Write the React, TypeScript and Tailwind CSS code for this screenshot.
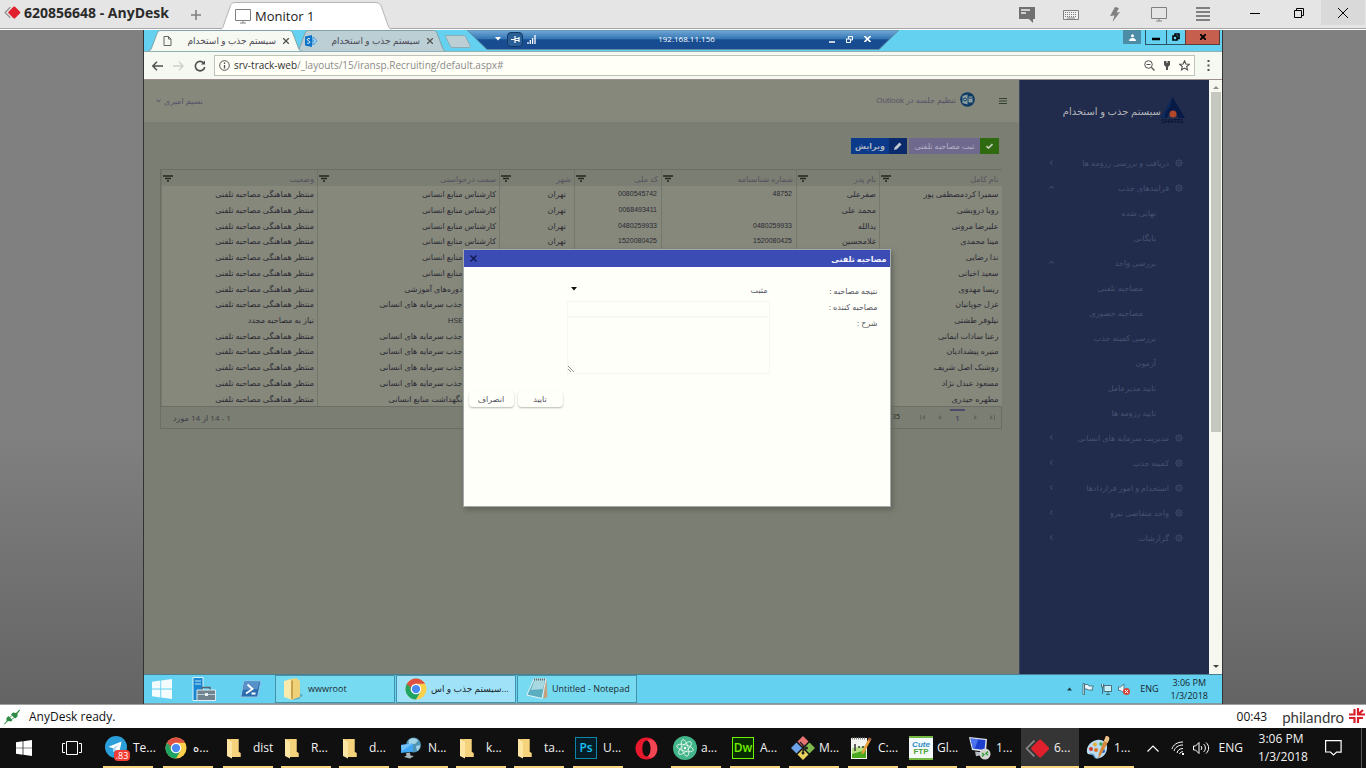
import { useState } from "react";
import type { ReactNode } from "react";

type Person = {
  name: string;
  father: string;
  certificate: string;
  nationalId: string;
  city: string;
  position: string;
  status: string;
};

const WAITING = "منتظر هماهنگی مصاحبه تلفنی";
const HR = "کارشناس منابع انسانی";
const TALENT = "کارشناس جذب سرمایه های انسانی";

const PEOPLE: Person[] = [
  { name: "سمیرا کردمصطفی پور", father: "صفرعلی", certificate: "48752", nationalId: "0080545742", city: "تهران", position: HR, status: WAITING },
  { name: "رویا درویشی", father: "محمد علی", certificate: "", nationalId: "0068493411", city: "تهران", position: HR, status: WAITING },
  { name: "علیرضا مرونی", father: "یدالله", certificate: "0480259933", nationalId: "0480259933", city: "تهران", position: HR, status: WAITING },
  { name: "مینا محمدی", father: "غلامحسین", certificate: "1520080425", nationalId: "1520080425", city: "تهران", position: HR, status: WAITING },
  { name: "ندا رضایی", father: "", certificate: "", nationalId: "", city: "", position: HR, status: WAITING },
  { name: "سعید اخیانی", father: "", certificate: "", nationalId: "", city: "", position: HR, status: WAITING },
  { name: "ریسا مهدوی", father: "", certificate: "", nationalId: "", city: "", position: "کارشناس دوره‌های آموزشی", status: WAITING },
  { name: "غزل جوپانیان", father: "", certificate: "", nationalId: "", city: "", position: TALENT, status: WAITING },
  { name: "نیلوفر طشتی", father: "", certificate: "", nationalId: "", city: "", position: "کارشناس HSE", status: "نیاز به مصاحبه مجدد" },
  { name: "رعنا سادات ایمانی", father: "", certificate: "", nationalId: "", city: "", position: TALENT, status: WAITING },
  { name: "منیره پیشدادیان", father: "", certificate: "", nationalId: "", city: "", position: TALENT, status: WAITING },
  { name: "روشنک اصل شریف", father: "", certificate: "", nationalId: "", city: "", position: TALENT, status: WAITING },
  { name: "مسعود عبدل نژاد", father: "", certificate: "", nationalId: "", city: "", position: TALENT, status: WAITING },
  { name: "مطهره حیدری", father: "", certificate: "", nationalId: "", city: "", position: "کارشناس نگهداشت منابع انسانی", status: WAITING },
];

const COLUMNS: { title: string; width: string }[] = [
  { title: "نام کامل", width: "w-[122px]" },
  { title: "نام پدر", width: "w-[83px]" },
  { title: "شماره شناسنامه", width: "w-[135px]" },
  { title: "کد ملی", width: "w-[87px]" },
  { title: "شهر", width: "w-[75px]" },
  { title: "سمت درخواستی", width: "w-[182px]" },
  { title: "وضعیت", width: "w-[156px]" },
];

type MenuItem = { label: string; level: 0 | 1 | 2; arrow?: "left" | "up" };

const MENU: MenuItem[] = [
  { label: "دریافت و بررسی رزومه ها", level: 0, arrow: "left" },
  { label: "فرایندهای جذب", level: 0, arrow: "up" },
  { label: "نهایی شده", level: 1 },
  { label: "بایگانی", level: 1 },
  { label: "بررسی واحد", level: 1, arrow: "up" },
  { label: "مصاحبه تلفنی", level: 2 },
  { label: "مصاحبه حضوری", level: 2 },
  { label: "بررسی کمیته جذب", level: 1 },
  { label: "آزمون", level: 1 },
  { label: "تایید مدیرعامل", level: 1 },
  { label: "تایید رزومه ها", level: 1 },
  { label: "مدیریت سرمایه های انسانی", level: 0, arrow: "left" },
  { label: "کمیته جذب", level: 0, arrow: "left" },
  { label: "استخدام و امور قراردادها", level: 0, arrow: "left" },
  { label: "واحد متقاضی نیرو", level: 0, arrow: "left" },
  { label: "گزارشات", level: 0, arrow: "left" },
];

/* ---------- icons ---------- */

function AnyDeskIcon({ size }: { size: number }) {
  return (
    <svg width={size} height={size} viewBox="0 0 24 24" className="shrink-0" aria-hidden="true">
      <path d="M9 4.500 1.500 12 9 19.500" fill="none" stroke="#8a8a8a" strokeWidth="1.600" />
      <path d="M14 3.500a1.500 1.500 0 0 1 1.600.4l7 7a1.500 1.500 0 0 1 0 2.200l-7 7a1.500 1.500 0 0 1-2.200 0l-7-7a1.500 1.500 0 0 1 0-2.200l7-7z" fill="#e0202c" />
    </svg>
  );
}

function ChromeIcon({ size }: { size: number }) {
  return (
    <svg width={size} height={size} viewBox="0 0 48 48" className="shrink-0" aria-hidden="true">
      <circle cx="24" cy="24" r="23" fill="#fbd04b" />
      <path d="M4.100 12.500A23 23 0 0 0 24 47l10-17.300L24 24l-10 5.800z" fill="#1fa463" />
      <path d="M4.100 12.500 14 29.700 24 13.500z" fill="#de4f44" />
      <path d="M4.100 12.500 14 29.700l10-5.700z" fill="#1fa463" />
      <path d="M4.100 12.500A23 23 0 0 1 43.900 12.500H24A11.500 11.500 0 0 0 13 20.500z" fill="#de4f44" />
      <circle cx="24" cy="24" r="11.500" fill="#fff" />
      <circle cx="24" cy="24" r="9" fill="#4a8af4" />
    </svg>
  );
}

function FolderIcon() {
  return (
    <svg width="14" height="21" viewBox="0 0 14 21" className="shrink-0" aria-hidden="true">
      <path d="M1 1h10.500v13l2 1v4H3z" fill="#ecc264" />
      <path d="M4 1h7.500v13l2 1v4H4z" fill="#f5d27c" />
      <path d="M0 1h1l4 3v16.500L0 18z" fill="#fde6a4" />
    </svg>
  );
}

function WindowsLogo({ size, color }: { size: number; color: string }) {
  return (
    <svg width={size} height={size} viewBox="0 0 20 20" fill={color} className="shrink-0" aria-hidden="true">
      <path d="M0 2.800 8.300 1.600v8H0zM9.200 1.500 20 0v9.600H9.200zM0 10.400h8.300v8L0 17.200zM9.200 10.400H20V20L9.200 18.500z" />
    </svg>
  );
}

function TelegramIcon() {
  return (
    <span className="relative block h-6 w-6 shrink-0">
      <svg width="22" height="22" viewBox="0 0 22 22" aria-hidden="true">
        <circle cx="11" cy="11" r="11" fill="#2b9fd9" />
        <path d="m3.500 10.800 13-5.200-2.200 11.200-3.800-2.900-2 2-.5-3.600z" fill="#fff" />
        <path d="m8 12.300 6.500-4.600-4 4.900-.3 2.400-1.700 1z" fill="#a9d5ee" />
      </svg>
      <span className="absolute top-[14px] left-[9px] flex h-[11px] w-4 items-center justify-center rounded-sm bg-[#f23c34] text-[9px] leading-none text-white">.83</span>
    </span>
  );
}

function GlobeMonitorIcon() {
  return (
    <svg width="22" height="22" viewBox="0 0 22 22" className="shrink-0" aria-hidden="true">
      <circle cx="13.500" cy="8" r="7.500" fill="#4f93b5" />
      <path d="M9 3c3-3 8-2 9 1-2 1-2 3-4 3s-1 4-3 3-3-4-2-7zM16 9l4-1c0 3-1 5-3 6z" fill="#a5d3e6" />
      <path d="m1 8 12-1.500v8L1 16z" fill="#3ea6f5" />
      <path d="m1 8 12-1.500L2 14z" fill="#73c3fb" />
      <path d="m6 16 4-.5.500 3L14 19l-4 2.500L4 20l2.500-1.500z" fill="#a7b5bd" />
    </svg>
  );
}

function AdobeIcon({ label, tone }: { label: string; tone: "cyan" | "green" }) {
  const colors =
    tone === "cyan"
      ? "border-[#0c87a8] bg-[#061d27] text-[#18c3f5]"
      : "border-[#6cf500] bg-[#072c00] text-[#75f000]";
  return (
    <span className={`flex h-[22px] w-[22px] shrink-0 items-center justify-center border text-[12px] leading-none font-semibold ${colors}`}>
      {label}
    </span>
  );
}

function OperaIcon() {
  return (
    <svg width="23" height="23" viewBox="0 0 24 24" aria-hidden="true">
      <path fillRule="evenodd" d="M12 .5C5.500.5.500 5.500.500 12S5.500 23.500 12 23.500 23.500 18.500 23.500 12 18.500.5 12 .5zm0 3.200c2.700 0 4.300 3.800 4.300 8.300S14.700 20.300 12 20.300 7.700 16.500 7.700 12 9.300 3.700 12 3.700z" fill="#e8192c" />
      <path d="M13 3.800C15.500 1.500 20 3 22 7c2 4 1.500 9-1.500 13-2.500 2-5.500 2-7.500.2 2-.7 3.300-4.200 3.300-8.200S15 4.500 13 3.800z" fill="#f9606a" opacity=".65" />
    </svg>
  );
}

function AtomIcon() {
  return (
    <svg width="24" height="24" viewBox="0 0 24 24" className="shrink-0" aria-hidden="true">
      <circle cx="12" cy="12" r="12" fill="#43b58a" />
      <g fill="none" stroke="#dff5ec" strokeWidth=".9">
        <ellipse cx="12" cy="12" rx="8.500" ry="3.200" transform="rotate(15 12 12)" />
        <ellipse cx="12" cy="12" rx="8.500" ry="3.200" transform="rotate(75 12 12)" />
        <ellipse cx="12" cy="12" rx="8.500" ry="3.200" transform="rotate(135 12 12)" />
      </g>
      <circle cx="12" cy="12" r="1.300" fill="#fff" />
    </svg>
  );
}

function GitIcon() {
  return (
    <svg width="24" height="24" viewBox="0 0 24 24" className="shrink-0" aria-hidden="true">
      <path d="m12 0 5.500 5.500L12 11 6.500 5.500z" fill="#e87373" />
      <path d="m18.500 6.500 5.500 5.500-5.500 5.500L13 12z" fill="#80bb4e" />
      <path d="m12 13 5.500 5.500L12 24l-5.500-5.500z" fill="#ecd25f" />
      <path d="m5.500 6.500L11 12l-5.500 5.500L0 12z" fill="#6ba2e8" />
      <path d="M9 6l6 6-3 3v3M12 9v6" fill="none" stroke="#222" strokeWidth="1.300" />
      <circle cx="12" cy="17" r="1.500" fill="#222" />
      <circle cx="15.500" cy="12" r="1.500" fill="#222" />
    </svg>
  );
}

function NotepadPlusIcon() {
  return (
    <svg width="22" height="24" viewBox="0 0 22 24" className="shrink-0" aria-hidden="true">
      <path d="M1 2h16v21H1z" fill="#f2f4f0" />
      <path d="M2 14 16 12v10H2z" fill="#4aa81f" />
      <path d="M2 12 16 10v4L2 18z" fill="#b6e07f" />
      <path d="M2 2.500h14" stroke="#888" strokeWidth="2" strokeDasharray="1 1" />
      <path d="M5 8v7M8 11h2M12 11h2" stroke="#333" strokeWidth="1.500" />
      <path d="m19 1.500 2.500 1.500L14 17l-2.500 1.500L12 15.500z" fill="#e8a13a" />
      <path d="m19 1.500 2.500 1.500-1.200 2-2.400-1.500z" fill="#9c5040" />
    </svg>
  );
}

function CuteFtpIcon() {
  return (
    <span className="flex h-6 w-6 shrink-0 flex-col items-center justify-center border-y-2 border-[#73b944] bg-[#f4f9fb] font-['Liberation_Sans',sans-serif] text-[8px] leading-[7px] font-bold">
      <span className="text-[#2e8ec4] italic">Cute</span>
      <span className="text-[#4da23a]">FTP</span>
    </span>
  );
}

function RemoteDesktopIcon() {
  return (
    <svg width="23" height="24" viewBox="0 0 23 24" className="shrink-0" aria-hidden="true">
      <path d="m1 1 18 2-1 13L4 14z" fill="#dfe4ea" />
      <path d="m2.500 2.500 15 1.500-1 10L5 12.500z" fill="#1c3fd0" />
      <path d="m2.500 2.500 8 .8-4 9.500L5 12.500z" fill="#4c73ee" />
      <path d="m7 15.500 6 .7v3l-5 1z" fill="#b7bec6" />
      <circle cx="17" cy="18" r="5.500" fill="#d2d5d1" />
      <path d="m14 17 2 1.500-2 2M20 15.500 18 17.500l2 1.500" fill="none" stroke="#2e9a35" strokeWidth="1.400" />
    </svg>
  );
}

function PaintIcon() {
  return (
    <svg width="24" height="24" viewBox="0 0 24 24" className="shrink-0" aria-hidden="true">
      <path d="M11 4c6-1 11 3 10 9-.5 5-5 9.500-10 9.500-3 0-2-3-4-4-2-1-5 1-6-2C0 10 5 5 11 4z" fill="#b9dcf1" />
      <path d="M3 18c2-1 5-1 6 2s3 2 5 1-1 2-4 1.500c-2 0-2-3-4-3.500z" fill="#5ca0cf" />
      <circle cx="5" cy="13" r="2" fill="#d43c2e" />
      <circle cx="9" cy="8.500" r="2" fill="#e8b030" />
      <circle cx="15" cy="8" r="1.800" fill="#3fa34d" />
      <circle cx="10" cy="14" r="2" fill="#e07020" />
      <circle cx="17" cy="15" r="2" fill="#2563c4" />
      <path d="M20 0c2 0 4 1 3 4L15 19l-3 3 1-5z" fill="#d7863a" />
      <path d="M20 0c2 0 4 1 3 4l-1.500 3L18 5z" fill="#e8c28a" />
    </svg>
  );
}

function FilterIcon() {
  return (
    <svg width="10" height="7" viewBox="0 0 10 7" className="shrink-0" aria-hidden="true">
      <path d="M0 1h10M2 3.500h6M4 6h2" stroke="#26271f" strokeWidth="1.600" />
    </svg>
  );
}

function PageIcon() {
  return (
    <svg width="9" height="10" viewBox="0 0 9 10" className="shrink-0" fill="none" stroke="#666" aria-hidden="true">
      <path d="M1 .5h4.500L8 3v6.500H1zM5.500.5V3H8" />
    </svg>
  );
}

function GearIcon() {
  return (
    <svg width="8" height="8" viewBox="0 0 10 10" className="shrink-0" fill="none" stroke="#465171" aria-hidden="true">
      <circle cx="5" cy="5" r="1.500" strokeWidth=".8" />
      <circle cx="5" cy="5" r="3.700" strokeWidth=".8" />
      <path d="M5 0v2M5 8v2M0 5h2M8 5h2M1.500 1.500l1.400 1.400M7.100 7.100l1.400 1.400M8.500 1.500 7.100 2.900M2.900 7.100 1.500 8.500" strokeWidth=".8" />
    </svg>
  );
}

/* ---------- client window ---------- */

function ClientTitleBar() {
  return (
    <header className="flex h-[30px] items-stretch border-b border-white bg-[#e5e5e5] shadow-[inset_0_-1px_0_#a6a6a6]">
      <div className="flex w-[188px] items-center gap-[3px] pb-1 pl-1 text-[14px] font-bold text-[#2b2b2b]">
        <AnyDeskIcon size={17} />
        <h1 className="whitespace-nowrap">620856648 - AnyDesk</h1>
      </div>
      <button type="button" aria-label="New tab" className="flex w-4 items-center justify-center text-[#808080]">
        <svg width="10" height="10" viewBox="0 0 10 10" stroke="currentColor" strokeWidth="1.600"><path d="M5 0v10M0 5h10" /></svg>
      </button>
      <div className="relative ml-4 flex h-[30px] w-[172px] items-center gap-1 pt-[3px] pl-[15px] text-[13px]">
        <svg className="absolute inset-0 h-full w-full" viewBox="0 0 172 30" preserveAspectRatio="none" aria-hidden="true">
          <path d="M0 29c3 0 3-2 4-5l6-17c1-4 3-4.500 6-4.500h138c5 0 6 1 7.500 4.500l6 17c1 3 2 5 4.500 5" fill="#fff" stroke="#b5b5b5" />
          <path d="M2 29.500h168" stroke="#fff" />
        </svg>
        <svg width="16" height="15" viewBox="0 0 16 15" className="relative" fill="none" stroke="#808080" aria-hidden="true">
          <path d="M.5.500h15v11H.500zM5 14h6M8 11.500V14" />
        </svg>
        <span className="relative text-[#1a1a1a]">Monitor 1</span>
      </div>
      <div className="flex-1" />
      <div className="mr-[22px] flex items-center gap-7 text-[#808080]">
        <button type="button" aria-label="Chat">
          <svg width="16" height="16" viewBox="0 0 16 16"><path d="M0 0h16v12h-2v4l-4-4H0z" fill="#707070" /><path d="M2 3h9M2 6h5" stroke="#eee" strokeWidth="1.400" /></svg>
        </button>
        <button type="button" aria-label="Keyboard">
          <svg width="16" height="10" viewBox="0 0 16 10"><path d="M.5.500h15v9H.500z" fill="#f0f0f0" stroke="currentColor" /><path d="M2 2.500h12M2 4.500h12M2 6.500h12" stroke="currentColor" strokeDasharray="1 1" /><path d="M4 8h8" stroke="currentColor" /></svg>
        </button>
        <button type="button" aria-label="Actions" className="flex w-4 justify-center">
          <svg width="10" height="15" viewBox="0 0 10 15" fill="currentColor"><path d="M5 0 9 1 6.500 5.500 10 5 2.500 15 4.500 8.500 0 9z" /></svg>
        </button>
        <button type="button" aria-label="Display">
          <svg width="16" height="15" viewBox="0 0 16 15" fill="none" stroke="currentColor"><path d="M.5.500h15v11H.500zM5 14h6M8 11.500V14" /></svg>
        </button>
        <button type="button" aria-label="Menu">
          <svg width="16" height="15" viewBox="0 0 16 15" stroke="currentColor" strokeWidth="2"><path d="M1 1h14M1 5h14M1 9h14M1 13h14" /></svg>
        </button>
      </div>
      <div className="flex h-[25px] text-black">
        <button type="button" aria-label="Minimize" className="flex w-11 items-center justify-center">
          <svg width="10" height="10" viewBox="0 0 10 10" stroke="currentColor"><path d="M0 5.500h10" /></svg>
        </button>
        <button type="button" aria-label="Restore" className="flex w-11 items-center justify-center">
          <svg width="10" height="10" viewBox="0 0 10 10" fill="none" stroke="currentColor"><path d="M.5 2.500h7v7h-7zM2.500 2.500v-2h7v7h-2" /></svg>
        </button>
        <button type="button" aria-label="Close" className="mr-px flex w-11 items-center justify-center bg-[#d9d9d9]">
          <svg width="10" height="10" viewBox="0 0 10 10" stroke="currentColor"><path d="m0 0 10 10M10 0 0 10" /></svg>
        </button>
      </div>
    </header>
  );
}

/* ---------- browser ---------- */

function BrowserTab({ active, icon, width, tone }: { active?: boolean; icon: ReactNode; width: string; tone: string }) {
  return (
    <div className={`relative flex h-[21px] shrink-0 items-center ${width} ${active ? "z-10" : "-ml-2"}`}>
      <svg className="absolute inset-0 h-full w-full" viewBox="0 0 158 21" preserveAspectRatio="none" aria-hidden="true">
        <path d="M0 21.500C3 21 4 20 5 17l5-13C11 1.500 12 .5 14 .5h130c2 0 3 1 4 3.500l5 13c1 3 2 4 5 4.500" className={tone} stroke="#7fa0a8" />
      </svg>
      <div className="relative flex w-full items-center pr-[14px] pl-4">
        {icon}
        <span dir="rtl" className="ml-auto text-[9px] whitespace-nowrap text-[#4d4a55]">سیستم جذب و استخدام</span>
        <button type="button" aria-label="Close tab" className="ml-[7px] text-[#555]">
          <svg width="6" height="6" viewBox="0 0 6 6" stroke="currentColor" strokeWidth="1.300"><path d="m0 0 6 6M6 0 0 6" /></svg>
        </button>
      </div>
    </div>
  );
}

function SessionBar() {
  return (
    <div className="absolute top-0 left-1/2 z-20 h-5 w-[432px] -translate-x-1/2">
      <svg className="absolute inset-0 h-full w-full" viewBox="0 0 432 20" preserveAspectRatio="none" aria-hidden="true">
        <defs>
          <linearGradient id="session" x1="0" y1="0" x2="0" y2="1">
            <stop offset="0" stopColor="#76a9d8" />
            <stop offset=".45" stopColor="#3377b4" />
            <stop offset=".5" stopColor="#184d92" />
            <stop offset="1" stopColor="#184a8f" />
          </linearGradient>
        </defs>
        <path d="M0 0h432l-20 19.500H20z" fill="url(#session)" stroke="#5d8fa5" />
      </svg>
      <div className="relative flex h-[18px] items-center px-7 text-white">
        <svg width="6" height="4" viewBox="0 0 6 4" fill="currentColor" aria-hidden="true"><path d="M0 0h6L3 3.500z" /></svg>
        <button type="button" aria-label="Pin" className="ml-[6px] flex h-[15px] w-4 items-center justify-center rounded-sm border border-[#123a66] bg-[#2a5f98]">
          <svg width="9" height="7" viewBox="0 0 9 7" stroke="currentColor" strokeWidth="1.200"><path d="M0 3.500h4M4 0v7M4 2.500h4M4 4.500h4M8 1v5" /></svg>
        </button>
        <svg width="9" height="9" viewBox="0 0 9 9" className="ml-1" stroke="currentColor" strokeWidth="1.300" aria-hidden="true"><path d="M1 9V7M3.300 9V5M5.600 9V3M8 9V0" /></svg>
        <span className="flex-1 pl-2 text-center text-[8px]">192.168.11.156</span>
        <div className="flex items-center gap-[11px]">
          <svg width="6" height="7" viewBox="0 0 6 7" stroke="currentColor" strokeWidth="1.500" aria-hidden="true"><path d="M0 6h6" /></svg>
          <svg width="7" height="7" viewBox="0 0 7 7" fill="none" stroke="currentColor" aria-hidden="true"><path d="M.5 3h4v3.500h-4zM2.500 3V.5h4V4h-2" /></svg>
          <svg width="7" height="6" viewBox="0 0 7 6" stroke="currentColor" strokeWidth="1.600" aria-hidden="true"><path d="m.5 0 6 6M6.500 0l-6 6" /></svg>
        </div>
      </div>
    </div>
  );
}

function BrowserChrome() {
  return (
    <>
      <div className="relative flex h-[21px] bg-[#64d1f0] pl-[3px]">
        <BrowserTab active width="w-[156px]" tone="fill-[#f6f8f2]" icon={<PageIcon />} />
        <BrowserTab
          width="w-[152px]"
          tone="fill-[#bccfd5]"
          icon={
            <svg width="13" height="12" viewBox="0 0 13 12" className="-ml-[6px] shrink-0" aria-hidden="true">
              <path d="M7 2h2l3.500 4L9 10H7z" fill="#5aa8e0" />
              <path d="m8 3.500 2.500 2.500L8 8.500" fill="none" stroke="#e8f2fa" />
              <path d="M0 1.500 7 0v12L0 10.500z" fill="#0b74c8" />
              <path d="M5 4C4 3 2 3.500 2.300 4.800S5 6 4.800 7.300 2.500 8.500 2 7.800" fill="none" stroke="#fff" />
            </svg>
          }
        />
        <svg width="28" height="14" viewBox="0 0 28 14" className="-ml-[3px] mt-[5px]" aria-hidden="true">
          <path d="M2 .5h17c2 0 2.500.5 3 2l4 8c.5 1.500 0 2-1.500 2H9c-2 0-2.500-.5-3-2l-4-8C1.500 1 1 .5 2 .5z" fill="#bccfd5" stroke="#8aabb4" />
        </svg>
        <SessionBar />
        <div className="ml-auto flex h-[15px]">
          <button type="button" aria-label="Profile" className="mr-1 flex h-[14px] w-[18px] items-center justify-center bg-[#4c8ca6]">
            <svg width="7" height="7" viewBox="0 0 7 7" fill="#fff"><circle cx="3.500" cy="1.800" r="1.500" /><path d="M0 7c0-4 7-4 7 0z" /></svg>
          </button>
          <button type="button" aria-label="Minimize" className="flex w-[22px] items-center justify-center border border-t-0 border-[#2b5361]">
            <svg width="8" height="8" viewBox="0 0 8 8" stroke="#000" strokeWidth="2.500"><path d="M0 6h8" /></svg>
          </button>
          <button type="button" aria-label="Restore" className="flex w-[18px] items-center justify-center border-b border-[#2b5361]">
            <svg width="8" height="8" viewBox="0 0 8 8" fill="none" stroke="#000" strokeWidth="1.600"><path d="M1 3h4v4H1zM3 2.500V1h4v4.500H5" /></svg>
          </button>
          <button type="button" aria-label="Close" className="mr-[2px] flex w-[35px] items-center justify-center border border-t-0 border-[#5e3a36] bg-[#c65f4e]">
            <svg width="6" height="6" viewBox="0 0 6 6" stroke="#000" strokeWidth="1.800"><path d="m0 0 6 6M6 0 0 6" /></svg>
          </button>
        </div>
      </div>
      <div className="flex h-[29px] items-center border-t border-b border-t-[#8fb0b6] border-b-[#9b8e8e] bg-[#f6f8f2] pl-2 text-[#505050]">
        <button type="button" aria-label="Back">
          <svg width="11" height="10" viewBox="0 0 11 10" fill="none" stroke="currentColor" strokeWidth="1.500"><path d="M11 5H1M5 .7.800 5 5 9.300" /></svg>
        </button>
        <button type="button" aria-label="Forward" className="ml-[10px] text-[#ccd0c9]">
          <svg width="11" height="10" viewBox="0 0 11 10" fill="none" stroke="currentColor" strokeWidth="1.300"><path d="M0 5h10M6 .7 10.200 5 6 9.300" /></svg>
        </button>
        <button type="button" aria-label="Reload" className="ml-[10px]">
          <svg width="12" height="12" viewBox="0 0 12 12" fill="none" stroke="currentColor" strokeWidth="1.600"><path d="M10 3.500A4.700 4.700 0 1 0 10.700 7" /><path d="M11 .5v4H7z" fill="currentColor" stroke="none" /></svg>
        </button>
        <div className="mx-2 flex h-[21px] flex-1 items-center gap-1 border border-[#bfc3b8] bg-[#fffff8] px-1">
          <svg width="11" height="11" viewBox="0 0 11 11" fill="none" stroke="currentColor" aria-hidden="true"><circle cx="5.500" cy="5.500" r="4.800" /><path d="M5.500 5v3.500M5.500 2.500V4" strokeWidth="1.300" /></svg>
          <p className="flex-1 text-[10px] text-[#8a8a88]">
            <span className="text-[#2f2f2f]">srv-track-web</span>/_layouts/15/iransp.Recruiting/default.aspx#
          </p>
          <svg width="11" height="11" viewBox="0 0 11 11" fill="none" stroke="currentColor" aria-hidden="true"><circle cx="4.500" cy="4.500" r="3.800" /><path d="M2.500 4.500h4M7.500 7.500l3 3" strokeWidth="1.200" /></svg>
          <svg width="8" height="9" viewBox="0 0 8 9" fill="currentColor" className="ml-1" aria-hidden="true"><path d="M1 0h6v4L5 6v3H3V6L1 4z" /><path d="M3.500 0h1v2h-1z" fill="#fffff8" /></svg>
          <svg width="11" height="11" viewBox="0 0 11 11" fill="none" stroke="currentColor" strokeWidth="1.100" className="ml-1" aria-hidden="true"><path d="m5.500.8 1.400 3.200 3.400.3-2.600 2.200.8 3.400-3-1.800-3 1.800.8-3.400L.7 4.300 4.100 4z" /></svg>
        </div>
        <button type="button" aria-label="Browser menu" className="mr-3 ml-1">
          <svg width="3" height="11" viewBox="0 0 3 11" fill="currentColor"><path d="M.5 0h2v2h-2zM.5 4.500h2v2h-2zM.5 9h2v2h-2z" /></svg>
        </button>
      </div>
    </>
  );
}

/* ---------- recruiting site ---------- */

function Sidebar() {
  const indent = ["pr-[26px]", "pr-[53px]", "pr-[66px]"];
  return (
    <aside dir="rtl" className="flex w-[190px] shrink-0 flex-col border-l border-[#3b4663] bg-[#212b4b]">
      <div className="flex h-[70px] items-center pr-6 pb-2 text-[10px] text-[#b4b6bb]">
        <div className="flex flex-col items-center">
          <svg width="24" height="21" viewBox="0 0 24 21" aria-hidden="true">
            <path d="M11.500 0 24 21h-6.500c-1-4-3-6-6-6S7 17 6 21H0z" fill="#071a45" />
            <path d="M11.500 0 9 10l-4 5-1 6H0z" fill="#0b2a5f" />
            <circle cx="12" cy="17" r="3.500" fill="#b0472b" />
          </svg>
          <span className="font-['Liberation_Sans',sans-serif] text-[6px] leading-[7px] font-bold text-[#071233]">SHATEL</span>
        </div>
        <h2 className="whitespace-nowrap">سیستم جذب و استخدام</h2>
      </div>
      <nav>
        <ul>
          {MENU.map((item) => (
            <li key={item.label}>
              <a href="#" className={`flex h-[25px] items-center gap-[6px] pl-7 text-[8px] text-[#465071] ${indent[item.level]}`}>
                {item.level === 0 && <GearIcon />}
                <span className="flex-1 whitespace-nowrap">{item.label}</span>
                {item.arrow && (
                  <svg width="5" height="5" viewBox="0 0 5 5" fill="none" stroke="currentColor" className="mx-px" aria-hidden="true">
                    <path d={item.arrow === "left" ? "M3.500.5 1 2.500l2.500 2" : "M.5 3.500 2.500 1l2 2.500"} />
                  </svg>
                )}
              </a>
            </li>
          ))}
        </ul>
      </nav>
    </aside>
  );
}

function PeopleTable() {
  const numeric = "border-l border-[#74776c] px-[3px] pr-1 text-right font-['Liberation_Sans',sans-serif] text-[7px]";
  const cell = "border-l border-[#74776c] px-[3px] whitespace-nowrap";
  return (
    <div className="mr-[17px] ml-4 border border-[#6b6e64]">
      <table dir="rtl" className="h-[236px] w-full table-fixed border-collapse bg-[#85887b] text-[8px] leading-[13px] text-[#2c2a35]">
        <thead className="bg-[#7b7e72] text-[#57525f]">
          <tr>
            {COLUMNS.map((column) => (
              <th key={column.title} scope="col" className={`h-4 border-l border-[#6f7268] p-0 pr-[3px] pl-px font-normal ${column.width}`}>
                <div className="flex items-center justify-between">
                  <span className="whitespace-nowrap">{column.title}</span>
                  <FilterIcon />
                </div>
              </th>
            ))}
          </tr>
        </thead>
        <tbody>
          {PEOPLE.map((person) => (
            <tr key={person.name}>
              <td className={cell}>{person.name}</td>
              <td className={cell}>{person.father}</td>
              <td className={numeric}>{person.certificate}</td>
              <td className={numeric}>{person.nationalId}</td>
              <td className={`${cell} pr-2`}>{person.city}</td>
              <td className={cell}>{person.position}</td>
              <td className={cell}>{person.status}</td>
            </tr>
          ))}
        </tbody>
      </table>
      <div className="flex h-[22px] items-center border-t border-[#6b6e64] bg-[#7b7e72] pr-[10px] pl-3 text-[8px] text-[#3f3d48]">
        <span dir="rtl">1 - 14 از 14 مورد</span>
        <span className="ml-auto text-[7px] text-[#222]">35</span>
        <div className="ml-5 flex items-center gap-3 text-[#62655f]">
          <svg width="5" height="5" viewBox="0 0 5 5" fill="currentColor" aria-hidden="true"><path d="M0 0h1v5H0zM5 0v5L2 2.500z" /></svg>
          <svg width="5" height="5" viewBox="0 0 5 5" fill="currentColor" aria-hidden="true"><path d="M4 0v5L1 2.500z" /></svg>
          <span className="-mx-1 flex h-[18px] w-[15px] justify-center border-t-2 border-[#4d4a6c] leading-[13px] text-[#33305c]">1</span>
          <svg width="5" height="5" viewBox="0 0 5 5" fill="currentColor" aria-hidden="true"><path d="M1 0v5l3-2.500z" /></svg>
          <svg width="5" height="5" viewBox="0 0 5 5" fill="currentColor" className="-mr-1" aria-hidden="true"><path d="M4 0h1v5H4zM0 0v5l3-2.500z" /></svg>
        </div>
      </div>
    </div>
  );
}

function InterviewDialog() {
  const [result, setResult] = useState("positive");
  const button = "h-4 w-[45px] rounded-sm bg-[#fffffa] shadow-[0_1px_2px_#b5bab0]";
  return (
    <div className="absolute inset-0 flex items-center justify-center pt-[2px]">
      <section role="dialog" aria-labelledby="dialog-title" dir="rtl" className="h-[258px] w-[428px] border border-[#a5a8a8] bg-[#fffffa] text-[8px] leading-4 text-[#55565e] shadow-[2px_3px_5px_#62655b]">
        <div className="flex h-[17px] items-center justify-between bg-[#3b4db5] pr-[3px] pl-[6px]">
          <h3 id="dialog-title" className="text-[8px] font-bold text-[#f3f3fa]">مصاحبه تلفنی</h3>
          <button type="button" aria-label="بستن" className="text-[#10164a]">
            <svg width="7" height="7" viewBox="0 0 7 7" stroke="currentColor" strokeWidth="1.300"><path d="m.5.5 6 6M6.500.5l-6 6" /></svg>
          </button>
        </div>
        <form onSubmit={(event) => event.preventDefault()}>
          <div className="flex pt-4 pr-3">
            <div className="flex w-[108px] flex-col">
              <label htmlFor="result">نتیجه مصاحبه :</label>
              <label htmlFor="interviewer">مصاحبه کننده :</label>
              <label htmlFor="description">شرح :</label>
            </div>
            <div className="flex w-[203px] flex-col">
              <div className="relative mb-1 flex h-[14px]">
                <select id="result" value={result} onChange={(event) => setResult(event.target.value)} className="w-full appearance-none bg-transparent px-[2px] leading-[14px] outline-none">
                  <option value="positive">مثبت</option>
                  <option value="negative">منفی</option>
                </select>
                <svg width="6" height="4" viewBox="0 0 6 4" className="pointer-events-none absolute top-1 left-1" aria-hidden="true"><path d="M0 0h6L3 3.500z" fill="#111" /></svg>
              </div>
              <input id="interviewer" type="text" className="h-4 border border-[#f6f7f1] bg-transparent px-1 outline-none" />
              <div className="relative flex">
                <textarea id="description" className="h-[57px] w-full resize-none border border-[#f6f7f1] bg-transparent px-1 outline-none" />
                <svg width="6" height="6" viewBox="0 0 6 6" className="absolute bottom-[2px] left-px" stroke="#777" strokeWidth=".8" aria-hidden="true"><path d="m0 0 6 6M0 3l3 3" /></svg>
              </div>
            </div>
          </div>
          <div className="mt-[17px] flex justify-end gap-1 pl-[5px]">
            <button type="submit" className={button}>تایید</button>
            <button type="button" className={button}>انصراف</button>
          </div>
        </form>
      </section>
    </div>
  );
}

function RecruitingPage() {
  return (
    <div className="flex min-h-0 flex-1">
      <div className="relative flex min-w-0 flex-1">
        <main className="flex min-w-0 flex-1 flex-col bg-[#7b7e72]">
          <div className="flex h-[42px] items-center justify-between bg-[#85887b] pr-3 pl-3 text-[8px] text-[#5a5268]">
            <button type="button" className="flex items-center gap-[3px]">
              <svg width="5" height="4" viewBox="0 0 5 4" fill="none" stroke="currentColor" aria-hidden="true"><path d="m.5.5 2 2.500 2-2.500" /></svg>
              <span dir="rtl">نسیم امیری</span>
            </button>
            <div className="flex items-center">
              <span dir="rtl" className="font-['Liberation_Sans','DejaVu_Sans',sans-serif] whitespace-nowrap">تنظیم جلسه در Outlook</span>
              <svg width="15" height="15" viewBox="0 0 15 15" className="-mt-1 ml-1" aria-hidden="true">
                <circle cx="7.500" cy="7.500" r="7.300" fill="#0d3b66" />
                <path d="m2.500 4 5-1.500v10l-5-1.500zM8.500 4.500h4v6h-4z" fill="#8fa0a0" />
                <circle cx="5" cy="7.500" r="1.500" fill="none" stroke="#0d3b66" />
                <path d="m8.500 5 2 2 2-2" fill="none" stroke="#0d3b66" />
              </svg>
              <button type="button" aria-label="Toggle menu" className="ml-6">
                <svg width="8" height="8" viewBox="0 0 8 8" stroke="#31412f"><path d="M0 1.500h8M0 4h8M0 6.500h8" /></svg>
              </button>
            </div>
          </div>
          <div className="mt-4 mr-5 mb-[15px] flex justify-end gap-[2px] text-[8px]">
            <button type="button" className="flex h-4 items-stretch bg-[#0b3a8a] font-bold text-[#a9b3c2]">
              <span className="flex w-[38px] items-center justify-center">ویرایش</span>
              <span className="flex w-[18px] items-center justify-center bg-[#0a2a6c]">
                <svg width="8" height="8" viewBox="0 0 8 8" fill="#c5cad2" aria-hidden="true"><path d="M0 8l.8-2.800L5.500.5 7.500 2.500 2.800 7.200z" /></svg>
              </span>
            </button>
            <button type="button" className="flex h-4 items-stretch bg-[#6f6a8d] text-[#b4b0c6]">
              <span className="flex w-[71px] items-center justify-center whitespace-nowrap">ثبت مصاحبه تلفنی</span>
              <span className="flex w-[19px] items-center justify-center bg-[#306a10]">
                <svg width="7" height="6" viewBox="0 0 7 6" fill="none" stroke="#c8d0c0" strokeWidth="1.600" aria-hidden="true"><path d="m.5 3 2 2 4-4" /></svg>
              </span>
            </button>
          </div>
          <PeopleTable />
        </main>
        <Sidebar />
        <InterviewDialog />
      </div>
      <div className="flex w-[13px] shrink-0 flex-col items-center bg-[#f6f8f0] py-1">
        <svg width="6" height="8" viewBox="0 0 6 8" fill="#8d9089" aria-hidden="true"><path d="M0 5h6L3 2z" /></svg>
        <div className="h-[58%] w-[10px] bg-[#c5c8bf]" />
        <svg width="6" height="6" viewBox="0 0 6 6" fill="#44463f" className="mt-auto" aria-hidden="true"><path d="M0 1h6L3 4z" /></svg>
      </div>
    </div>
  );
}

/* ---------- server taskbar ---------- */

function ServerTaskbar() {
  const item = "flex w-[120px] items-center gap-1 border border-[#4591aa] px-2 text-[9px] text-[#1d2a30]";
  return (
    <div className="flex h-[30px] items-stretch border-t border-b border-t-[#497f90] border-b-[#7d9aa2] bg-[#64d1f0]">
      <div className="flex w-[131px] items-center pl-2">
        <WindowsLogo size={20} color="#f3fbfd" />
        <svg width="24" height="24" viewBox="0 0 24 24" className="ml-5" aria-hidden="true">
          <path d="M1 .5h10v23H1z" fill="#1886d0" stroke="#d8f1fa" />
          <path d="M3 4h6M3 7h6" stroke="#bfe6f6" />
          <path d="M10 13V10.500h8V13" fill="none" stroke="#53656f" strokeWidth="1.500" />
          <path d="M5 13h18.500v10.500H5z" fill="#70838e" stroke="#dcecf2" />
          <path d="M5 17.500h18" stroke="#b9cbd3" />
          <path d="M13 16h3v3h-3z" fill="#e8eef0" />
        </svg>
        <svg width="22" height="18" viewBox="0 0 22 18" className="ml-6" aria-hidden="true">
          <path d="M4 1h17l-3.500 16H.800z" fill="#2c6db0" stroke="#8fc4e6" />
          <path d="M4.500 2h15l-2 7L2.800 10z" fill="#5791c8" />
          <path d="m7.500 4.500 5 4.500-6.500 4.500M11.500 13.500h4" fill="none" stroke="#fff" strokeWidth="1.800" />
        </svg>
      </div>
      <button type="button" className={`${item} bg-[#76dbf1]`}>
        <svg width="20" height="22" viewBox="0 0 20 22" aria-hidden="true">
          <path d="m13 14 6 3-4 4-6 1z" fill="#5aa9c9" />
          <path d="M3 2 12 0l4 3v16l-9 3z" fill="#efd277" />
          <path d="M0 3 6 1.500 8 4v18l-8-3z" fill="#fbeaae" />
          <path d="M7 3 9 2v18l-2 2z" fill="#c9a24a" />
        </svg>
        <span>wwwroot</span>
      </button>
      <button type="button" className={`${item} ml-px bg-[#a0e2f8]`}>
        <ChromeIcon size={22} />
        <span className="whitespace-nowrap">سیستم جذب و اس...</span>
      </button>
      <button type="button" className={`${item} ml-px bg-[#76dbf1]`}>
        <svg width="22" height="22" viewBox="0 0 22 22" className="shrink-0" aria-hidden="true">
          <path d="M19 2h1.500l1 17-4 2z" fill="#c7a17c" />
          <path d="M8 1h12l-4 19.500L.800 17z" fill="#5aaec0" stroke="#e6f1f3" />
          <path d="M8.500 2h10.500l-2 9L5 12z" fill="#a8d8e0" />
          <path d="M8 1.500h12" stroke="#666" strokeWidth="2" strokeDasharray="1 1" />
        </svg>
        <span className="whitespace-nowrap">Untitled - Notepad</span>
      </button>
      <div className="ml-auto flex items-center pr-[14px] text-[9px] text-[#16262c]">
        <svg width="5" height="4" viewBox="0 0 5 4" fill="#1d3a44" aria-hidden="true"><path d="M0 3.500h5L2.500.5z" /></svg>
        <svg width="12" height="12" viewBox="0 0 12 12" className="ml-[10px]" fill="#e8f8fc" stroke="#3e6572" strokeWidth=".8" aria-hidden="true"><path d="M1 .5h1.500V12H1zM2.500 1.500H6l1 1.500h4.500L10 5l1 2H6L5 6H2.500z" /></svg>
        <svg width="12" height="12" viewBox="0 0 12 12" className="ml-[6px]" fill="#c9eef8" stroke="#3e6572" strokeWidth=".9" aria-hidden="true"><path d="M4 2.500h7.500v6H4zM6 11.500h4M8 8.500v3M1.500 1v3h2V1M2.500 4v7" /></svg>
        <svg width="12" height="12" viewBox="0 0 12 12" className="ml-[6px]" aria-hidden="true">
          <path d="M.5 4h2L6 1v9L2.500 7.500h-2z" fill="#e8f8fc" stroke="#3e6572" strokeWidth=".8" />
          <circle cx="8.500" cy="8.500" r="3.500" fill="#d4473c" />
          <path d="m7 7 3 3M10 7l-3 3" stroke="#fff" />
        </svg>
        <span className="ml-[10px]">ENG</span>
        <div className="ml-3 text-center leading-[13px]">
          <div>3:06 PM</div>
          <div>1/3/2018</div>
        </div>
      </div>
    </div>
  );
}

/* ---------- host taskbar ---------- */

type Task = { id: string; icon: ReactNode; label: string; width: string; folder?: boolean };

const TASKS_LEFT: Task[] = [
  { id: "telegram", icon: <TelegramIcon />, label: "Te...", width: "w-[60px]" },
  { id: "chrome", icon: <ChromeIcon size={22} />, label: "ه...", width: "w-[60px]" },
  { id: "dist", icon: <FolderIcon />, label: "dist", width: "w-[58px]", folder: true },
  { id: "r", icon: <FolderIcon />, label: "R...", width: "w-[58px]", folder: true },
  { id: "d", icon: <FolderIcon />, label: "d...", width: "w-[59px]", folder: true },
  { id: "network", icon: <GlobeMonitorIcon />, label: "N...", width: "w-[58px]" },
  { id: "k", icon: <FolderIcon />, label: "k...", width: "w-[58px]", folder: true },
  { id: "ta", icon: <FolderIcon />, label: "ta...", width: "w-[59px]", folder: true },
  { id: "photoshop", icon: <AdobeIcon label="Ps" tone="cyan" />, label: "U...", width: "w-[59px]" },
];

const TASKS_RIGHT: Task[] = [
  { id: "atom", icon: <AtomIcon />, label: "a...", width: "w-[59px]" },
  { id: "dreamweaver", icon: <AdobeIcon label="Dw" tone="green" />, label: "A...", width: "w-[59px]" },
  { id: "git", icon: <GitIcon />, label: "M...", width: "w-[59px]" },
  { id: "editor", icon: <NotepadPlusIcon />, label: "C:...", width: "w-[59px]" },
  { id: "ftp", icon: <CuteFtpIcon />, label: "Gl...", width: "w-[59px]" },
  { id: "rdp", icon: <RemoteDesktopIcon />, label: "1...", width: "w-[55px]" },
];

function TaskButton({ task }: { task: Task }) {
  return (
    <div className={`flex shrink-0 ${task.width}`}>
      <button type="button" className="flex w-[50px] items-center border-b-2 border-[#f8d581] pt-[2px]">
        <span className={`flex w-[30px] shrink-0 ${task.folder ? "pl-1" : "pl-[2px]"}`}>{task.icon}</span>
        <span className="whitespace-nowrap">{task.label}</span>
      </button>
    </div>
  );
}

function HostTaskbar() {
  return (
    <footer className="flex h-10 shrink-0 items-stretch bg-[#101010] text-[12px] text-[#f2f2f2]">
      <button type="button" aria-label="Start" className="flex w-12 items-center justify-center">
        <WindowsLogo size={16} color="#fff" />
      </button>
      <button type="button" aria-label="Task view" className="mr-[7px] flex w-12 items-center justify-center">
        <svg width="20" height="14" viewBox="0 0 20 14" fill="none" stroke="#fff"><path d="M4.500.5h11v13h-11zM3 2.500H.500v9H3M17 2.500h2.500v9H17" /></svg>
      </button>
      {TASKS_LEFT.map((task) => (
        <TaskButton key={task.id} task={task} />
      ))}
      <button type="button" aria-label="Opera" className="flex w-[39px] shrink-0 items-center pl-[3px]">
        <OperaIcon />
      </button>
      {TASKS_RIGHT.map((task) => (
        <TaskButton key={task.id} task={task} />
      ))}
      <button type="button" className="mr-[5px] flex w-[58px] shrink-0 items-center gap-1 border-b-2 border-[#f8d581] bg-[#353535] pt-[2px] pl-1">
        <AnyDeskIcon size={25} />
        <span>6...</span>
      </button>
      <TaskButton task={{ id: "paint", icon: <PaintIcon />, label: "1...", width: "w-[50px]" }} />
      <div className="ml-auto flex shrink-0 items-center">
        <svg width="12" height="7" viewBox="0 0 12 7" fill="none" stroke="#fff" strokeWidth="1.200" aria-hidden="true"><path d="M.5 6.500 6 1l5.500 5.500" /></svg>
        <svg width="14" height="14" viewBox="0 0 14 14" className="ml-3" fill="none" stroke="#fff" aria-hidden="true">
          <path d="M1 8C2 4 6 1 12 1M3 10c1-3.500 4-6 9-6M6 12c.5-3 3-4.500 6-4.500M8.500 13c.5-1.700 2-2.300 3.500-2.300" />
          <path d="M11 12h2v2h-2z" fill="#fff" stroke="none" />
        </svg>
        <svg width="17" height="14" viewBox="0 0 17 14" className="ml-2" fill="none" stroke="#fff" aria-hidden="true">
          <path d="M.5 5h2L6 1.500v11L2.500 9h-2zM8 5c1 1 1 3 0 4M10.500 3c2.500 2 2.500 6 0 8M13 1.500c3.500 3 3.500 8 0 11" />
        </svg>
        <span className="ml-[9px]">ENG</span>
        <div className="ml-[15px] w-[46px] text-center leading-[18px]">
          <div>3:06 PM</div>
          <div>1/3/2018</div>
        </div>
        <button type="button" aria-label="Notifications" className="ml-[21px]">
          <svg width="17" height="16" viewBox="0 0 17 16" fill="none" stroke="#fff" strokeWidth="1.200"><path d="M.6.6h15.500v11.500h-4.500L8.500 15l-3-3H.6z" /></svg>
        </button>
        <div className="mr-1 ml-[19px] h-10 w-px bg-[#555]" />
      </div>
    </footer>
  );
}

function StatusBar() {
  return (
    <div className="flex h-[24px] shrink-0 items-center border-t border-[#a0a0a0] bg-white pr-px pl-1 text-[12px] text-[#111]">
      <svg width="16" height="16" viewBox="0 0 16 16" fill="#2f8a43" aria-hidden="true">
        <path d="m15.500.5-3.500 3.500-3-.5-2 2 4 4 2.500-2 0-2.800L16 1.500zM.5 15.500 4 12l3 .5 1.500-1.500-4-4L2.500 9v3L0 15z" />
        <path d="m6 8.500 2-2M8 10.500l2-2" stroke="#2f8a43" />
      </svg>
      <span className="ml-[9px]">AnyDesk ready.</span>
      <span className="ml-auto">00:43</span>
      <span className="ml-[15px] flex gap-1 font-['Lato',sans-serif] text-[15px] leading-[18px] text-[#3a3a3a]">
        philandro
        <svg width="17" height="17" viewBox="0 0 17 17" stroke="#d81e2a" strokeWidth="2.200" fill="none" aria-hidden="true">
          <path d="M6.500 1v5.500H1M10 0v6.500h7M1 10h5.500v5M10 15V10h5M10 6.500l5-4.500" />
        </svg>
      </span>
    </div>
  );
}

export default function App() {
  return (
    <div className="flex h-screen min-h-[600px] flex-col overflow-hidden font-['Open_Sans','DejaVu_Sans',sans-serif]">
      <ClientTitleBar />
      <div className="flex min-h-0 flex-1 bg-linear-to-b from-[#808080] from-60% to-[#646464] px-[143px]">
        <div className="flex min-w-0 flex-1 flex-col border-x border-[#333]">
          <BrowserChrome />
          <RecruitingPage />
          <ServerTaskbar />
        </div>
      </div>
      <StatusBar />
      <HostTaskbar />
    </div>
  );
}
